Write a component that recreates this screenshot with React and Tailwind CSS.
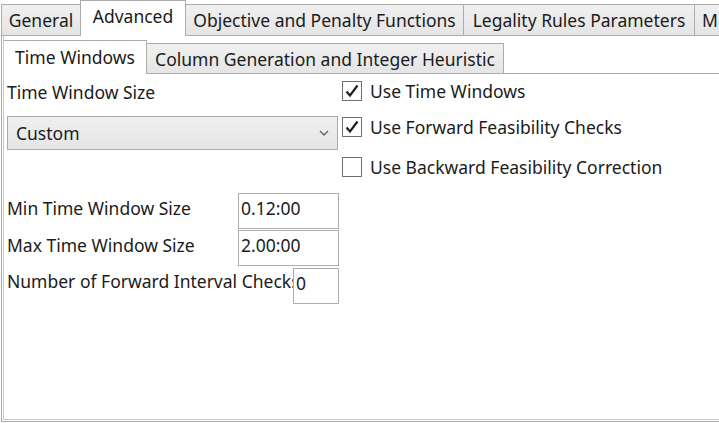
import React from "react";

const Tab = ({ label, selected, className = "" }) => {
  if (selected) {
    return (
      <div
        className={`h-full shrink-0 flex items-start justify-center whitespace-nowrap bg-white border-l border-t border-r border-[#acacac] ${className}`}
      >
        {label}
      </div>
    );
  }
  return (
    <div
      className={`shrink-0 flex items-center justify-center whitespace-nowrap overflow-hidden bg-gradient-to-b from-[#f0f0f0] to-[#e5e5e5] border border-[#acacac] ${className}`}
    >
      {label}
    </div>
  );
};

const CheckBox = ({ checked, label, className = "" }) => {
  return (
    <div className={`flex items-center gap-[8px] ${className}`}>
      <div className="w-[20px] h-[20px] border border-[#707070] bg-white flex items-center justify-center">
        {checked && (
          <svg width="16" height="16" viewBox="0 0 16 16">
            <path d="M2.5 8.5 L6 12.5 L13.5 2.5" fill="none" stroke="#212121" strokeWidth="2.2" />
          </svg>
        )}
      </div>
      <span className="whitespace-nowrap">{label}</span>
    </div>
  );
};

const TextBox = ({ value, className = "" }) => {
  return (
    <div className={`h-[36px] shrink-0 border border-[#abadb3] bg-white pl-[2px] pt-[1px] leading-[26px] ${className}`}>
      {value}
    </div>
  );
};

export default function App() {
  return (
    <div className="w-[719px] h-[423px] bg-white overflow-hidden text-[#1b1b1b] text-[17.5px] leading-[24px] font-['Noto_Sans',sans-serif]">
      {/* outer tabs */}
      <div className="flex items-end h-[36px] pl-[1px] overflow-hidden">
        <Tab label="General" className="w-[79px] h-[32px] border-r-0" />
        <Tab label={<span className="pt-[3px]">Advanced</span>} selected className="w-[106px]" />
        <Tab label="Objective and Penalty Functions" className="w-[278px] h-[32px] border-l-0" />
        <Tab label="Legality Rules Parameters" className="w-[231px] h-[32px] border-l-0" />
        <Tab label={<span className="pl-[7px] w-full">M</span>} className="w-[60px] h-[32px] border-l-0" />
      </div>

      {/* outer panel */}
      <div className="ml-[1px] h-[386px] border-l border-b border-[#acacac] pl-[1px] pb-[1px]">
        <div className="h-full border-l border-b border-[#c8c8c8] flex flex-col">
          {/* inner tabs */}
          <div className="flex items-end h-[38px] pt-[4px]">
            <Tab label={<span className="pt-[4px]">Time Windows</span>} selected className="w-[143px] border-l-0" />
            <Tab label="Column Generation and Integer Heuristic" className="w-[357px] h-[31px] border-l-0" />
            <div className="flex-1 h-full border-b border-[#acacac]" />
          </div>

          {/* content */}
          <div className="flex pl-[3px]">
            <div className="w-[332px] flex flex-col">
              <div className="h-[36px] flex items-center">Time Window Size</div>
              <div className="mt-[6px] h-[34px] w-[331px] flex items-center justify-between px-[8px] border border-[#acacac] bg-gradient-to-b from-[#f0f0f0] to-[#e5e5e5]">
                <span>Custom</span>
                <svg width="10" height="6" viewBox="0 0 10 6">
                  <path d="M1 1 L5 5 L9 1" fill="none" stroke="#606060" strokeWidth="1.3" />
                </svg>
              </div>

              <div className="mt-[43px] flex">
                <div className="w-[231px] pt-[2px] leading-[26px]">Min Time Window Size</div>
                <TextBox value="0.12:00" className="w-[101px]" />
              </div>
              <div className="mt-[1px] flex">
                <div className="w-[231px] pt-[2px] leading-[26px]">Max Time Window Size</div>
                <TextBox value="2.00:00" className="w-[101px]" />
              </div>
              <div className="mt-[2px] flex">
                <div className="w-[286px] leading-[26px] whitespace-nowrap overflow-hidden">
                  Number of Forward Interval Checks
                </div>
                <TextBox value="0" className="w-[46px]" />
              </div>
            </div>

            <div className="ml-[3px] flex flex-col pt-[5px]">
              <CheckBox checked label="Use Time Windows" />
              <CheckBox checked label="Use Forward Feasibility Checks" className="mt-[12px]" />
              <CheckBox label="Use Backward Feasibility Correction" className="mt-[16px]" />
            </div>
          </div>
        </div>
      </div>
    </div>
  );
}
